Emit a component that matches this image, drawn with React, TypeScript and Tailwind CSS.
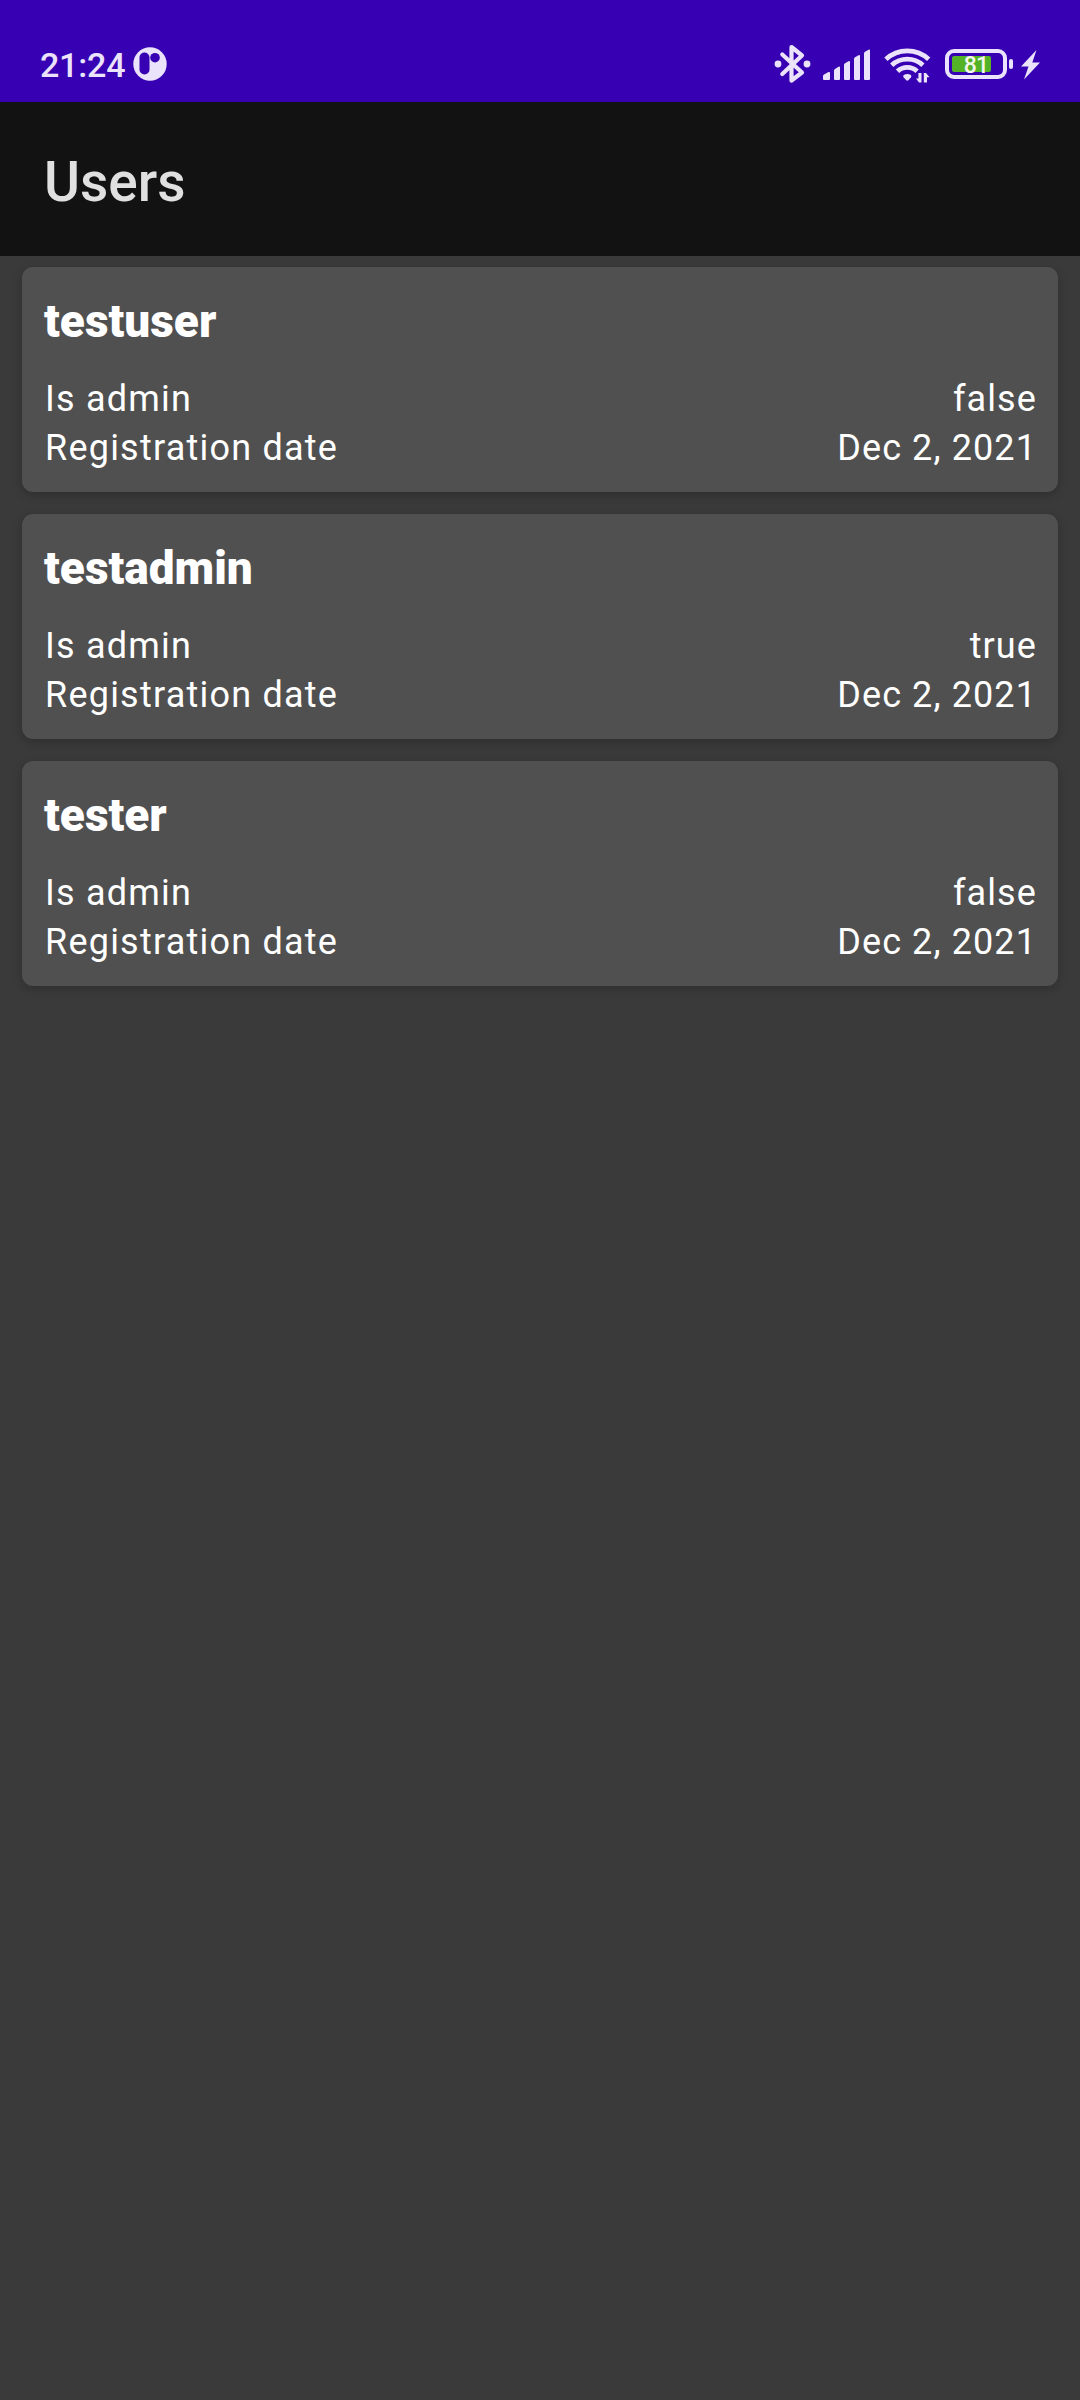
const users = [
  { name: 'testuser', isAdmin: false, date: 'Dec 2, 2021' },
  { name: 'testadmin', isAdmin: true, date: 'Dec 2, 2021' },
  { name: 'tester', isAdmin: false, date: 'Dec 2, 2021' },
];

function AppBadge() {
  return (
    <svg width="34" height="34" viewBox="0 0 34 34" className="ml-[8px]">
      <circle cx="17" cy="17" r="16.7" fill="#ebe3fb" />
      <rect x="6.5" y="5.5" width="10" height="22" rx="5" fill="#3700b3" />
      <circle cx="22" cy="10.7" r="4.8" fill="#3700b3" />
    </svg>
  );
}

function Bluetooth() {
  return (
    <svg width="38" height="40" viewBox="0 0 38 40" fill="none">
      <path d="M8.3 10.500 L28 28.500 L17.500 36.500 V3 L28 11.500 L8.3 30" stroke="#ebe3fb" strokeWidth="4.2" strokeLinecap="round" strokeLinejoin="round" />
      <circle cx="4" cy="20" r="3.4" fill="#ebe3fb" />
      <circle cx="33" cy="20" r="3.4" fill="#ebe3fb" />
    </svg>
  );
}

function Signal() {
  return (
    <svg width="48" height="32" viewBox="0 0 48 32" fill="#ebe3fb">
      <path d="M0 27 Q0 26 1 25.500 L5.500 23 Q7 22.500 7 24 V30 Q7 31 6 31 H1 Q0 31 0 30Z" />
      <path d="M11 21.500 Q11 20.500 12 20 L15.500 17.700 Q17 17 17 18.500 V30 Q17 31 16 31 H12 Q11 31 11 30Z" />
      <path d="M21 16 Q21 15 22 14.300 L25.500 12.300 Q27 11.600 27 13 V30 Q27 31 26 31 H22 Q21 31 21 30Z" />
      <path d="M31 10 Q31 9 32 8.300 L35.500 6.300 Q37 5.600 37 7 V30 Q37 31 36 31 H32 Q31 31 31 30Z" />
      <path d="M41 4.500 Q41 3.500 42 2.700 L45.500 .7 Q47 0 47 1.500 V30 Q47 31 46 31 H42 Q41 31 41 30Z" />
    </svg>
  );
}

function Wifi() {
  return (
    <svg width="48" height="36" viewBox="0 0 48 36" fill="none">
      <g stroke="#ebe3fb" strokeWidth="4.8">
        <path d="M1.900 12.200 A31.500 31.500 0 0 1 44.700 12.200" />
        <path d="M7.700 18.200 A23 23 0 0 1 38.900 18.200" />
        <path d="M13.500 24.200 A14.200 14.200 0 0 1 33.100 24.200" />
      </g>
      <path d="M19.800 28 Q23.300 25.800 26.800 28 Q28 29 27 30.300 L24.600 33 Q23.300 34.300 22 33 L19.600 30.300 Q18.600 29 19.800 28Z" fill="#ebe3fb" />
      <path d="M37.500 26 V35.500 H35 L32 31.500 H34.400 V26Z M39.800 35.500 V26 H42 L45.500 30.300 H43 V35.500Z" fill="#ebe3fb" />
    </svg>
  );
}

function Battery() {
  return (
    <div className="flex items-center">
      <div className="flex h-[30px] w-[62px] items-center rounded-[9px] border-4 border-[#ebe3fb] pl-[3px]">
        <div className="flex h-4 w-[39px] items-center justify-end rounded-[2px] bg-[#54b226]">
          <span className="mr-[3px] mt-[2px] text-[23px] font-medium leading-none tracking-[-1px] text-[#f3f7ee]">81</span>
        </div>
      </div>
      <div className="ml-[2px] h-[10px] w-1 rounded-[2px] bg-[#ebe3fb]" />
    </div>
  );
}

function StatusBar() {
  return (
    <header className="flex h-[102px] items-start justify-between bg-[#3700b3] pl-10 pr-10 pt-[44px] text-[#ebe3fb]">
      <div className="flex h-10 items-center">
        <span className="mt-[2px] text-[34px] font-medium leading-10 tracking-[-0.2px]">21:24</span>
        <AppBadge />
      </div>
      <div className="flex h-10 items-center">
        <Bluetooth />
        <div className="ml-[11px] mt-px"><Signal /></div>
        <div className="ml-[13px] mt-px"><Wifi /></div>
        <div className="ml-[13px]"><Battery /></div>
        <svg width="19" height="30" viewBox="0 0 19 30" className="ml-2 mt-px" fill="#ebe3fb">
          <path d="M15.500 0 L0 16.500 H7.500 L3 29.500 L19 12.500 H11.300Z" />
        </svg>
      </div>
    </header>
  );
}

function Row({ label, value }: { label: string; value: string }) {
  return (
    <div className="-mr-px ml-px flex justify-between text-[36px] leading-[49px]">
      <span className="tracking-[1.22px]">{label}</span>
      <span className="tracking-[1.1px]">{value}</span>
    </div>
  );
}

export default function App() {
  return (
    <div className="flex h-[2400px] w-[1080px] flex-col bg-[#3a3a3a] font-['Roboto',sans-serif]">
      <StatusBar />
      <div className="flex h-[154px] items-center bg-[#121212] pl-11">
        <h1 className="mt-[5px] text-[55px] font-medium leading-[64px] text-[#e0e0e0]">Users</h1>
      </div>
      <main className="flex flex-col gap-[22px] px-[22px] pt-[11px]">
        {users.map((user) => (
          <section key={user.name} className="h-[225px] rounded-[11px] bg-[#505050] px-[22px] pt-[28px] text-white shadow-[0_3px_10px_rgba(0,0,0,0.2)]">
            <h2 className="mb-[28px] text-[46px] font-black leading-[52px]">{user.name}</h2>
            <Row label="Is admin" value={String(user.isAdmin)} />
            <Row label="Registration date" value={user.date} />
          </section>
        ))}
      </main>
    </div>
  );
}
